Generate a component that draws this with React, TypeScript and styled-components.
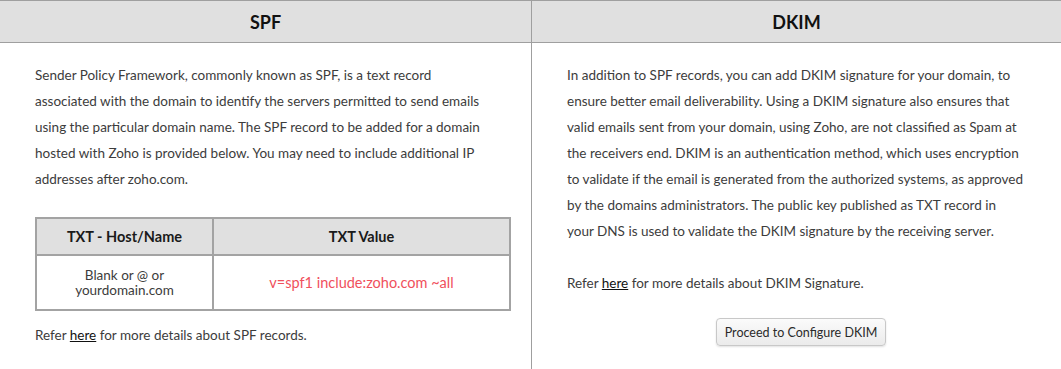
import React from 'react';
import styled, { createGlobalStyle } from 'styled-components';

const GlobalStyle = createGlobalStyle`
  body {
    margin: 0;
    background: #ffffff;
    font-family: Lato, "Open Sans", Arial, sans-serif;
    color: #333333;
  }
`;

const Wrapper = styled.div`
  display: grid;
  grid-template-columns: 531px 1fr;
  width: 1061px;
  height: 369px;
  border-top: 1px solid #9f9f9f;
  box-sizing: border-box;
  overflow: hidden;
`;

const Column = styled.section<{ $divider?: boolean }>`
  display: flex;
  flex-direction: column;
  border-left: ${({ $divider }) => ($divider ? '1px solid #9f9f9f' : 'none')};
`;

const Header = styled.h2`
  margin: 0;
  height: 41px;
  display: flex;
  align-items: center;
  justify-content: center;
  background: #e0e0e0;
  border-bottom: 1px solid #9f9f9f;
  font-size: 18px;
  font-weight: 700;
  color: #111111;
`;

const Body = styled.div<{ $right: number }>`
  padding: 19px ${({ $right }) => $right}px 0 35px;
  font-size: 13.5px;
  line-height: 26px;
  color: #3c3c3c;
`;

const Para = styled.p<{ $gap?: number }>`
  margin: 0 0 ${({ $gap }) => $gap ?? 0}px;
  white-space: nowrap;
`;

const Link = styled.a`
  color: #111111;
  text-decoration: underline;
  cursor: pointer;
`;

const Table = styled.table`
  width: 476px;
  border-collapse: collapse;
  margin: 25px 0 11px;
  border: 2px solid #a3a3a3;
`;

const Th = styled.th<{ $w?: number }>`
  width: ${({ $w }) => ($w ? `${$w}px` : 'auto')};
  height: 35px;
  background: #e0e0e0;
  border: 2px solid #a3a3a3;
  font-size: 14.5px;
  font-weight: 700;
  color: #1a1a1a;
  text-align: center;
  padding: 0;
`;

const Td = styled.td<{ $red?: boolean }>`
  height: 53px;
  border: 2px solid #a3a3a3;
  text-align: center;
  padding: 0;
  font-size: ${({ $red }) => ($red ? '14.5px' : '13.5px')};
  line-height: 15px;
  color: ${({ $red }) => ($red ? '#f0505c' : '#3c3c3c')};
`;

const ButtonRow = styled.div`
  display: flex;
  justify-content: center;
  padding-top: 22px;
`;

const Button = styled.button`
  width: 170px;
  height: 28px;
  border: 1px solid #c8c8c8;
  border-radius: 4px;
  background: linear-gradient(#fbfbfb, #ebebeb);
  box-shadow: 0 1px 2px rgba(0, 0, 0, 0.12);
  font-family: Lato, "Open Sans", Arial, sans-serif;
  font-size: 12.5px;
  color: #2a2a2a;
  cursor: pointer;
`;

export default function App() {
  return (
    <>
      <GlobalStyle />
      <Wrapper>
        <Column>
          <Header>SPF</Header>
          <Body $right={21}>
            <Para>
              Sender Policy Framework, commonly known as SPF, is a text record<br />
              associated with the domain to identify the servers permitted to send emails<br />
              using the particular domain name. The SPF record to be added for a domain<br />
              hosted with Zoho is provided below. You may need to include additional IP<br />
              addresses after zoho.com.
            </Para>
            <Table>
              <thead>
                <tr>
                  <Th $w={175}>TXT - Host/Name</Th>
                  <Th>TXT Value</Th>
                </tr>
              </thead>
              <tbody>
                <tr>
                  <Td>Blank or @ or<br />yourdomain.com</Td>
                  <Td $red>v=spf1 include:zoho.com ~all</Td>
                </tr>
              </tbody>
            </Table>
            <Para>
              Refer <Link>here</Link> for more details about SPF records.
            </Para>
          </Body>
        </Column>
        <Column $divider>
          <Header>DKIM</Header>
          <Body $right={26}>
            <Para $gap={26}>
              In addition to SPF records, you can add DKIM signature for your domain, to<br />
              ensure better email deliverability. Using a DKIM signature also ensures that<br />
              valid emails sent from your domain, using Zoho, are not classified as Spam at<br />
              the receivers end. DKIM is an authentication method, which uses encryption<br />
              to validate if the email is generated from the authorized systems, as approved<br />
              by the domains administrators. The public key published as TXT record in<br />
              your DNS is used to validate the DKIM signature by the receiving server.
            </Para>
            <Para>
              Refer <Link>here</Link> for more details about DKIM Signature.
            </Para>
            <ButtonRow>
              <Button>Proceed to Configure DKIM</Button>
            </ButtonRow>
          </Body>
        </Column>
      </Wrapper>
    </>
  );
}
